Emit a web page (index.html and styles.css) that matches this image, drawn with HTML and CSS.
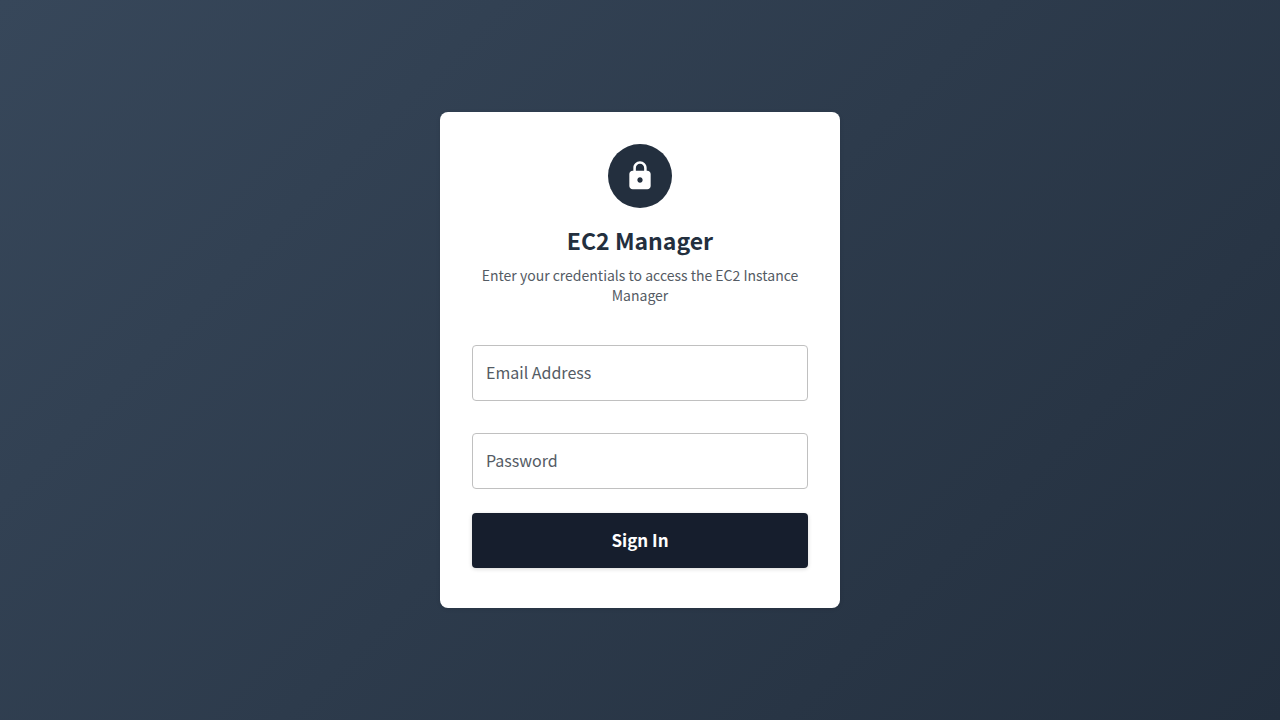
FILE: index.html
```html
<!DOCTYPE html>
<html lang="en">
<head>
<meta charset="utf-8">
<meta name="viewport" content="width=device-width, initial-scale=1">
<title>EC2 Manager</title>
<link rel="stylesheet" href="styles.css">
</head>
<body>
<main class="page">
  <section class="card">
    <header class="intro">
      <div class="badge">
        <svg class="badge-icon" viewBox="0 0 24 24" aria-hidden="true"><path d="M17.500 8H17V6c0-2.760-2.240-5-5-5S7 3.240 7 6v2h-.5C5.100 8 4 9.100 4 10.500v9C4 20.900 5.100 22 6.500 22h11c1.400 0 2.500-1.100 2.500-2.500v-9C20 9.100 18.900 8 17.500 8zM12 17c-1.100 0-2-.9-2-2s.9-2 2-2 2 .9 2 2-.9 2-2 2zm3.100-9H8.900V6c0-1.710 1.390-3.100 3.100-3.100s3.100 1.390 3.100 3.100v2z"/></svg>
      </div>
      <h1 class="title">EC2 Manager</h1>
      <p class="subtitle">Enter your credentials to access the EC2 Instance Manager</p>
    </header>
    <form class="form">
      <input class="field" type="email" placeholder="Email Address" aria-label="Email Address">
      <input class="field" type="password" placeholder="Password" aria-label="Password">
      <button class="submit" type="submit">Sign In</button>
    </form>
  </section>
</main>
</body>
</html>
```
FILE: styles.css
```css
* {
  box-sizing: border-box;
}

body {
  margin: 0;
  font-family: "Noto Sans CJK SC", "Noto Sans", sans-serif;
  color: #232f3e;
}

.page {
  display: flex;
  align-items: center;
  justify-content: center;
  min-height: 100vh;
  padding: 16px;
  background: linear-gradient(135deg, #37475a 0%, #232f3e 100%);
}

.card {
  width: 100%;
  max-width: 400px;
  padding: 32px 32px 40px;
  border-radius: 8px;
  background: #fff;
  box-shadow: 0 1px 4px rgba(0, 0, 0, 0.1);
}

.intro {
  display: flex;
  flex-direction: column;
  align-items: center;
  text-align: center;
  margin-bottom: 40px;
}

.badge {
  display: flex;
  align-items: center;
  justify-content: center;
  width: 64px;
  height: 64px;
  margin-bottom: 16px;
  border-radius: 50%;
  background: #232f3e;
}

.badge-icon {
  width: 32px;
  height: 32px;
  fill: #fff;
}

.title {
  margin: 0 0 8px;
  font-size: 23px;
  font-weight: 700;
  line-height: 33px;
}

.subtitle {
  margin: 0;
  font-size: 14px;
  line-height: 20px;
  color: #545b64;
}

.form {
  display: flex;
  flex-direction: column;
}

.field {
  width: 100%;
  height: 56px;
  margin: 0 0 32px;
  padding: 0 13px 2px;
  border: 1px solid #c0c0c0;
  border-radius: 4px;
  background: #fff;
  font: inherit;
  font-size: 16px;
  color: #161e2d;
}

.field:nth-of-type(2) {
  margin-bottom: 24px;
}

.field::placeholder {
  color: #545b64;
  opacity: 1;
}

.submit {
  height: 55px;
  padding: 0 16px 2px;
  border: 0;
  border-radius: 4px;
  background: #161e2d;
  box-shadow: 0 1px 4px rgba(0, 0, 0, 0.16);
  font: inherit;
  font-size: 17px;
  font-weight: 700;
  color: #fff;
  cursor: pointer;
}
```
